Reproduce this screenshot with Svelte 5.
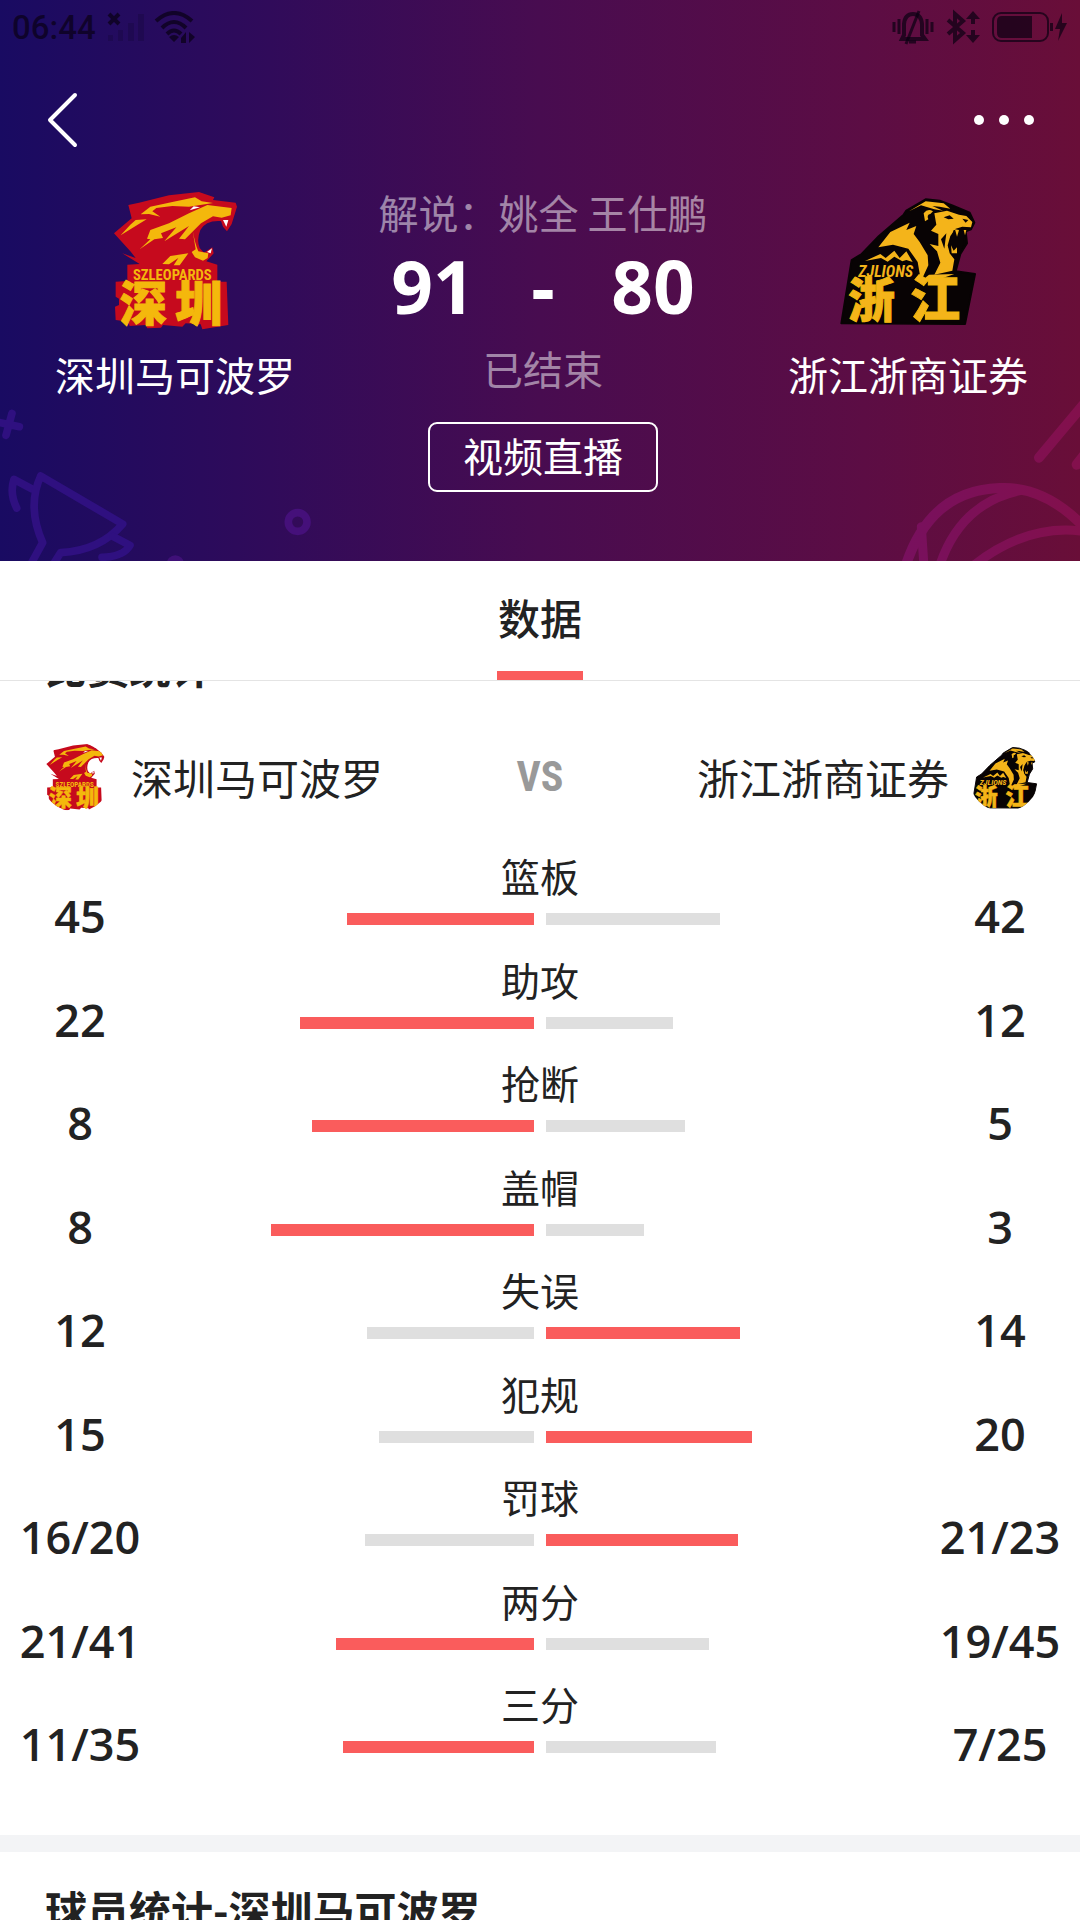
<script lang="ts">
	interface Stat {
		label: string;
		home: string;
		away: string;
	}

	const home = '深圳马可波罗';
	const away = '浙江浙商证券';

	const stats: Stat[] = [
		{ label: '篮板', home: '45', away: '42' },
		{ label: '助攻', home: '22', away: '12' },
		{ label: '抢断', home: '8', away: '5' },
		{ label: '盖帽', home: '8', away: '3' },
		{ label: '失误', home: '12', away: '14' },
		{ label: '犯规', home: '15', away: '20' },
		{ label: '罚球', home: '16/20', away: '21/23' },
		{ label: '两分', home: '21/41', away: '19/45' },
		{ label: '三分', home: '11/35', away: '7/25' }
	];

	// "16/20" is made/attempted, so it counts as a rate
	function toNumber(value: string) {
		const [made, tried] = value.split('/').map(Number);
		return tried ? made / tried : made;
	}

	const rows = stats.map((s) => {
		const h = toNumber(s.home);
		const a = toNumber(s.away);
		return {
			...s,
			homeShare: (h / (h + a)) * 100,
			awayShare: (a / (h + a)) * 100,
			homeLeads: h > a
		};
	});
</script>

{#snippet leopards()}
	<svg class="logo" viewBox="42 54 432 432" aria-hidden="true">
		<path
			fill="#c60a1d"
			d="M75 190 128 145 118 105 150 98 240 76 330 66 376 82 372 90 440 98 444 110 428 162 414 184 402 170 396 153Q350 150 334 180 322 210 332 234L345 248 370 232 374 250 352 274 385 284V335H413L418 465 340 478 335 463 290 460 280 470 222 465 216 473 175 475 170 465 122 468 118 455 80 450 78 410 90 405V386L80 380V335L115 333V284L152 282 100 250 140 264 124 244Z"
		/>
		<g fill="#f4b80c">
			<path d="M155 133 184 110 250 96 318 82 338 94 372 99 300 110 250 108 202 114 190 124 214 140 180 132Z" />
			<path
				d="M174 206 184 180 240 160 300 130 355 105 428 114 425 136 398 143 372 139 336 160 288 208 270 206 300 168 226 214 262 172 216 190 222 204 196 208 152 238 184 208Z"
			/>
			<path d="M95 196 124 164 140 150 173 148 146 164Z" />
			<path d="M310 176Q318 222 328 244L358 250 356 264 342 272 318 262 308 246 320 238Z" />
			<path d="M220 282 244 258 298 250 272 286 254 286 268 264 240 283Z" />
		</g>
		<g fill="#fff">
			<path d="M302 121 314 109 333 112Z" />
			<path d="M402 150 418 150 412 170Z" />
			<path d="M354 246 369 235 365 250Z" />
		</g>
		<text class="tag" x="250" y="330" font-size="44" text-anchor="middle">SZLEOPARDS</text>
		<text class="city" x="92" y="452" font-size="142">深</text>
		<text class="city" x="258" y="452" font-size="142">圳</text>
	</svg>
{/snippet}

{#snippet lions()}
	<svg class="logo" viewBox="51 24 432 432" aria-hidden="true">
		<path
			fill="#080304"
			stroke="#080304"
			stroke-width="6"
			stroke-linejoin="round"
			d="M67 430 98 240 128 222 180 168 254 104 262 92 320 58 362 62 400 76 452 98 466 128 456 148 440 154 444 190 424 222 410 274 468 282 438 432Z"
		/>
		<g fill="#f4b41a">
			<path d="M178 202 214 156 272 128 262 150 292 138 284 162 302 186 326 226 328 256 306 304 296 246 268 206 222 194Z" />
			<path d="M270 94 320 64 374 70 394 86 362 80 340 78 372 92 346 88 306 76Z" />
			<path d="M314 100Q326 84 342 94L334 102Q322 104 328 118L318 124Z" />
			<path
				d="M346 100 384 92 420 104 442 108 460 126 456 142 430 140 410 146 394 168 386 196 392 220 406 238 400 272 346 284 364 248 354 214 332 192 358 198 358 162 336 152 352 134Z"
			/>
			<path d="M300 308 330 284 406 282 372 294Z" />
			<path d="M138 243 184 222 200 234 226 212 242 234 262 214 281 246 262 240 250 244 226 230 206 245 186 234Z" />
		</g>
		<g fill="#080304">
			<path d="M404 150 438 152 432 196 422 224 398 224 388 200Z" />
			<path d="M374 112 392 106 404 116 388 118Z" />
			<path d="M366 178 382 160 376 206Z" />
			<path d="M430 116 448 120 440 128Z" />
		</g>
		<g fill="#f4b41a">
			<path d="M408 148 420 150 414 170Z" />
			<path d="M434 150 442 150 438 166Z" />
			<path d="M396 196 404 212 414 202 414 220 398 220Z" />
		</g>
		<text class="tag lion" x="200" y="290" font-size="48" font-style="italic" text-anchor="middle">ZJLIONS</text>
		<text class="city lion" x="88" y="412" font-size="140">浙</text>
		<text class="city lion" x="274" y="412" font-size="150">江</text>
	</svg>
{/snippet}

<div class="page">
	<header class="hero">
		<svg class="decor left" viewBox="0 135 960 468" aria-hidden="true">
			<g fill="none" stroke="#2f1080" stroke-width="23" stroke-linecap="round" stroke-linejoin="round">
				<path d="M-4 187 58 200M36 160 18 226" />
				<path d="M50 444Q28 400 42 358L94 386" />
				<path d="M122 348Q80 440 128 548L96 606M122 348 368 492Q300 572 182 578L164 606" />
				<path d="M340 530 390 556Q370 590 306 592" />
				<circle cx="893" cy="486" r="28" stroke="#45107a" />
			</g>
			<circle cx="526" cy="612" r="26" fill="#3f1078" />
		</svg>
		<svg class="decor right" viewBox="0 0 900 603" aria-hidden="true">
			<defs>
				<linearGradient id="ball" x1="370" x2="900" y1="0" y2="0" gradientUnits="userSpaceOnUse">
					<stop offset="0" stop-color="#78105e" />
					<stop offset="1" stop-color="#83104c" />
				</linearGradient>
			</defs>
			<g fill="none" stroke="url(#ball)" stroke-width="30" stroke-linecap="round">
				<path d="M910 134 777 293M910 288 890 314" />
				<path d="M376 620Q450 390 660 384 800 378 920 510" />
				<path stroke-width="27" d="M720 392Q540 430 478 620M424 500 432 620M576 620Q740 490 910 514" />
			</g>
		</svg>

		<div class="status">
			<span class="time">06:44</span>
			<svg width="38" height="32" viewBox="0 0 38 32" aria-hidden="true">
				<path d="M2 3 12 13M12 3 2 13" stroke="currentColor" stroke-width="4" />
				<g fill="currentColor" opacity="0.25">
					<path d="M1 24h5v6H1zM11 19h5v11h-5zM21 12h6v18h-6zM31 3h6v27h-6z" />
				</g>
			</svg>
			<svg class="wifi" width="42" height="32" viewBox="0 0 42 32" aria-hidden="true">
				<g fill="none" stroke="currentColor" stroke-width="4">
					<path d="M2 10Q20-6 38 10" />
					<path d="M8 17Q20 5 32 17" />
					<path d="M13 23Q20 16 27 23" />
				</g>
				<path fill="currentColor" d="M15 26Q20 22 25 26L20 31ZM32 21V32H27V27ZM35 21V32L41 26Z" />
			</svg>
			<span class="grow"></span>
			<svg width="42" height="36" viewBox="0 0 42 36" aria-hidden="true">
				<g fill="none" stroke="currentColor" stroke-width="3">
					<path d="M2 13v10M7 10v15M35 10v15M40 13v10" />
					<path stroke-width="4" d="M10 30H33L30 26V15Q29 5 21 5 13 5 12 15V26Z" />
					<path d="M14 35 27 2M17 33h7" />
				</g>
			</svg>
			<svg class="bluetooth" width="34" height="36" viewBox="0 0 34 36" aria-hidden="true">
				<path d="M2 11 17 24 9 31V5L17 12 2 25" fill="none" stroke="currentColor" stroke-width="4" />
				<path fill="currentColor" d="M27 2 34 10H29V15H25V10H20ZM27 34 20 26H25V21H29V26H34Z" />
			</svg>
			<svg width="62" height="36" viewBox="0 0 62 36" aria-hidden="true">
				<rect x="1" y="4" width="55" height="28" rx="8" fill="none" stroke="currentColor" stroke-width="2" />
				<path fill="currentColor" d="M10 7H40V29H10Q5 29 5 24V12Q5 7 10 7ZM58 14h3v8h-3z" />
			</svg>
			<svg width="14" height="36" viewBox="0 0 14 36" aria-hidden="true">
				<path fill="currentColor" d="M8 4 1 20H6L4 32 13 14H8Z" />
			</svg>
		</div>

		<div class="nav">
			<button class="icon-btn" aria-label="返回">
				<svg width="32" height="56" viewBox="0 0 32 56" aria-hidden="true">
					<path
						d="M29 3 4 28 29 53"
						fill="none"
						stroke="#fff"
						stroke-width="4"
						stroke-linecap="round"
						stroke-linejoin="round"
					/>
				</svg>
			</button>
			<button class="icon-btn" aria-label="更多">
				<svg width="60" height="12" viewBox="0 0 60 12" aria-hidden="true">
					<g fill="#fff">
						<circle cx="5" cy="6" r="5" />
						<circle cx="30" cy="6" r="5" />
						<circle cx="55" cy="6" r="5" />
					</g>
				</svg>
			</button>
		</div>

		<div class="match">
			<div class="team">
				{@render leopards()}
				<span class="team-name">{home}</span>
			</div>
			<div class="center">
				<p class="muted">解说：姚全 王仕鹏</p>
				<p class="score"><span>91</span><span>-</span><span>80</span></p>
				<p class="muted">已结束</p>
				<button class="live">视频直播</button>
			</div>
			<div class="team">
				{@render lions()}
				<span class="team-name">{away}</span>
			</div>
		</div>
	</header>

	<div class="tabs" role="tablist">
		<button class="tab" role="tab" aria-selected="true">数据</button>
	</div>

	<main class="content">
		<section class="game-stats">
			<h2 class="title scrolled">比赛统计</h2>
			<div class="versus">
				<div class="side">
					<span class="avatar">{@render leopards()}</span>
					<span>{home}</span>
				</div>
				<span class="vs">VS</span>
				<div class="side end">
					<span>{away}</span>
					<span class="avatar">{@render lions()}</span>
				</div>
			</div>

			<ul class="stats">
				{#each rows as row}
					<li class="stat">
						<span class="value">{row.home}</span>
						<div class="compare">
							<span class="label">{row.label}</span>
							<div class="bars">
								<div class="track flip">
									<div class="bar" class:lead={row.homeLeads} style="width: {row.homeShare}%"></div>
								</div>
								<div class="track">
									<div class="bar" class:lead={!row.homeLeads} style="width: {row.awayShare}%"></div>
								</div>
							</div>
						</div>
						<span class="value">{row.away}</span>
					</li>
				{/each}
			</ul>
		</section>

		<section class="players">
			<h2 class="title">球员统计-{home}</h2>
		</section>
	</main>
</div>

<style>
	:global(body) {
		background: #fff;
	}
	.page {
		display: flex;
		flex-direction: column;
		height: 100vh;
		overflow: hidden;
		color: #222;
		font-family: 'Noto Sans CJK SC', sans-serif;
	}
	button {
		margin: 0;
		padding: 0;
		border: none;
		background: none;
		color: inherit;
		font-family: inherit;
		cursor: pointer;
	}
	p,
	h2 {
		margin: 0;
	}
	svg {
		display: block;
		flex: none;
	}

	.hero {
		position: relative;
		flex: none;
		padding-bottom: 69px;
		background: linear-gradient(90deg, #190b62 0%, #300b5a 25%, #480c50 50%, #5c0d44 80%, #690e38 100%);
		color: #fff;
	}
	.decor {
		position: absolute;
		bottom: 0;
	}
	.left {
		left: 0;
		width: 320px;
	}
	.right {
		right: 0;
		width: 300px;
	}

	.status {
		position: relative;
		display: flex;
		align-items: center;
		height: 54px;
		padding: 0 12px;
		color: rgba(8, 0, 16, 0.68);
	}
	.time {
		margin-right: 11px;
		font-family: Roboto, sans-serif;
		font-size: 33px;
		font-weight: 500;
	}
	.wifi {
		margin-left: 9px;
	}
	.grow {
		flex: 1;
	}
	.bluetooth {
		margin: 0 12px;
	}

	.nav {
		position: relative;
		display: flex;
		align-items: center;
		justify-content: space-between;
		height: 128px;
		padding: 2px 46px 0;
	}
	.icon-btn {
		display: block;
	}

	.match {
		position: relative;
		display: grid;
		grid-template-columns: 350px 1fr 344px;
	}
	.team {
		display: flex;
		flex-direction: column;
		align-items: center;
		gap: 14px;
		padding-top: 4px;
	}
	.logo {
		width: 144px;
		height: 144px;
		overflow: visible;
	}
	.tag {
		fill: #f4b80c;
		font-family: 'Liberation Sans Narrow', 'Roboto Condensed', Roboto, sans-serif;
		font-weight: 700;
	}
	.city {
		fill: #f4b80c;
		stroke: #f4b80c;
		stroke-width: 3px;
		font-weight: 900;
	}
	.lion {
		fill: #f4b41a;
	}
	.team-name {
		font-size: 40px;
		line-height: 56px;
	}
	.center {
		display: flex;
		flex-direction: column;
		align-items: center;
	}
	.muted {
		color: rgba(255, 255, 255, 0.5);
		font-size: 40px;
		line-height: 56px;
	}
	.score {
		display: grid;
		grid-template-columns: repeat(3, 110px);
		margin: 6px 0 14px;
		font-family: 'Open Sans', sans-serif;
		font-size: 73px;
		font-weight: 700;
		line-height: 80px;
		text-align: center;
	}
	.live {
		margin-top: 26px;
		padding: 0 33px 4px;
		border: 2px solid #fff;
		border-radius: 9px;
		font-size: 40px;
		line-height: 62px;
	}

	.tabs {
		display: flex;
		flex: none;
		justify-content: center;
		border-bottom: 1px solid #e4e4e4;
	}
	.tab {
		width: 86px;
		padding-top: 2px;
		border-bottom: 9px solid #fa5c5c;
		font-size: 42px;
		font-weight: 500;
		line-height: 108px;
	}

	.content {
		flex: 1;
		min-height: 0;
		overflow: hidden;
	}
	.title {
		font-size: 42px;
		font-weight: 700;
		line-height: 60px;
	}
	/* the first heading sits half under the tab bar */
	.scrolled {
		margin: -45px 45px 46px;
	}
	.game-stats {
		padding-bottom: 56px;
		border-bottom: 17px solid #f3f4f6;
	}
	.versus {
		display: grid;
		grid-template-columns: 1fr auto 1fr;
		align-items: center;
		padding: 0 41px;
		font-size: 42px;
		line-height: 70px;
	}
	.side {
		display: flex;
		align-items: center;
		gap: 20px;
	}
	.end {
		justify-content: flex-end;
	}
	.avatar {
		overflow: hidden;
		border-radius: 50%;
	}
	.avatar .logo {
		width: 70px;
		height: 70px;
	}
	.vs {
		color: #999;
		font-family: 'Liberation Sans Narrow', 'Roboto Condensed', Roboto, sans-serif;
		font-weight: 700;
	}

	.stats {
		display: grid;
		grid-auto-rows: 1fr;
		min-height: 932px;
		margin: 35px 0 0;
		padding: 0;
		list-style: none;
	}
	.stat {
		display: grid;
		grid-template-columns: 160px 1fr 160px;
	}
	.value {
		padding-top: 44px;
		font-family: 'Open Sans', sans-serif;
		font-size: 45px;
		font-weight: 600;
		line-height: 50px;
		text-align: center;
	}
	.compare {
		display: flex;
		flex-direction: column;
		gap: 10px;
		padding: 0 13px;
	}
	.label {
		font-size: 39px;
		line-height: 56px;
		text-align: center;
	}
	.bars {
		display: grid;
		grid-template-columns: 1fr 1fr;
		gap: 12px;
	}
	.track {
		display: flex;
	}
	.flip {
		justify-content: flex-end;
	}
	.bar {
		height: 12px;
		background: #dfdfdf;
	}
	.lead {
		background: #fa5c5c;
	}

	.players {
		padding: 27px 45px;
	}
</style>
